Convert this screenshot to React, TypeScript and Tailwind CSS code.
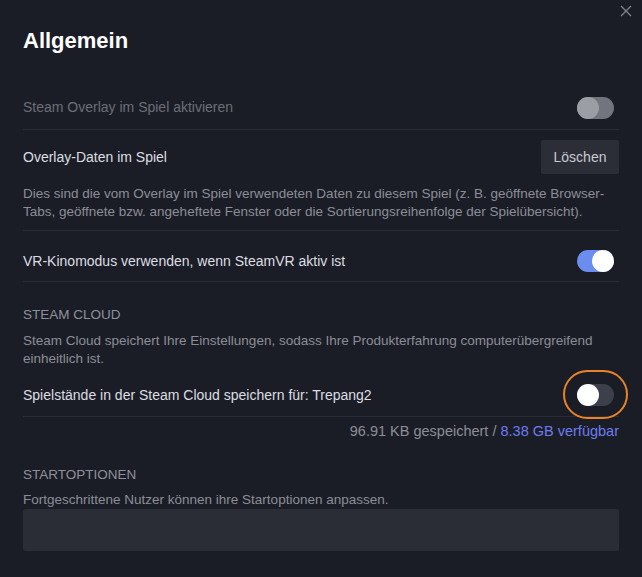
import React from 'react'

function Toggle({ on, dim }: { on: boolean; dim?: boolean }) {
  if (dim) {
    return (
      <div className="w-[37px] h-[22px] rounded-full bg-[#72757e] flex items-center">
        <div className="w-[22px] h-[22px] rounded-full bg-[#9c9ea6]" />
      </div>
    )
  }
  return (
    <div
      className={
        on
          ? 'w-[37px] h-[22px] rounded-full bg-[#6b8df0] flex items-center justify-end'
          : 'w-[37px] h-[22px] rounded-full bg-[#3d404b] flex items-center'
      }
    >
      <div className="w-[22px] h-[22px] rounded-full bg-white" />
    </div>
  )
}

export default function App() {
  return (
    <div
      className="relative w-[642px] h-[577px] overflow-hidden bg-[#1b1d26] text-[#dcdee2]"
      style={{ fontFamily: '"Liberation Sans", Arial, sans-serif' }}
    >
      <button className="absolute top-[5px] right-[10px] text-[#7e8189]">
        <svg width="12" height="12" viewBox="0 0 12 12" fill="none" stroke="currentColor" strokeWidth="1.4">
          <path d="M1 1 L11 11 M11 1 L1 11" />
        </svg>
      </button>

      <div className="px-[23px]">
        <h1 className="pt-[28px] text-[22px] leading-[26px] font-bold text-white">Allgemein</h1>

        <div className="mt-[32px] h-[44px] flex items-center justify-between border-b border-[#2a2d36]">
          <span className="text-[14px] text-[#6b6e77]">Steam Overlay im Spiel aktivieren</span>
          <div className="pr-[5px]">
            <Toggle on={false} dim />
          </div>
        </div>

        <div className="pt-[10px] pb-[9px] border-b border-[#2a2d36]">
          <div className="flex items-center justify-between">
            <span className="text-[14px]">Overlay-Daten im Spiel</span>
            <button className="h-[34px] w-[78px] rounded-[2px] bg-[#2b2e37] text-[14px] text-[#c9cbd1]">
              Löschen
            </button>
          </div>
          <p className="mt-[11px] pr-[14px] text-[13.5px] leading-[18px] text-[#8b8e97]">
            Dies sind die vom Overlay im Spiel verwendeten Daten zu diesem Spiel (z. B. geöffnete Browser-Tabs,
            geöffnete bzw. angeheftete Fenster oder die Sortierungsreihenfolge der Spielübersicht).
          </p>
        </div>

        <div className="pt-[19px] pb-[9px] flex items-center justify-between border-b border-[#2a2d36]">
          <span className="text-[14px]">VR-Kinomodus verwenden, wenn SteamVR aktiv ist</span>
          <div className="pr-[5px]">
            <Toggle on />
          </div>
        </div>

        <div className="pt-[24px]">
          <h2 className="text-[13.5px] leading-[18px] uppercase text-[#8e919a]">Steam Cloud</h2>
          <p className="mt-[8px] pr-[20px] text-[13.5px] leading-[18px] text-[#8b8e97]">
            Steam Cloud speichert Ihre Einstellungen, sodass Ihre Produkterfahrung computerübergreifend einheitlich ist.
          </p>
          <div className="pt-[16px] pb-[10px] flex items-center justify-between border-b border-[#2a2d36]">
            <span className="text-[14px]">Spielstände in der Steam Cloud speichern für: Trepang2</span>
            <div className="pr-[5px]">
              <div className="relative">
                <Toggle on={false} />
                <span className="absolute -left-[14px] -top-[14px] w-[65px] h-[49px] rounded-full border-2 border-[#e8832a]" />
              </div>
            </div>
          </div>
          <div className="mt-[5px] text-right text-[14.5px] leading-[18px] text-[#8b8e97]">
            96.91 KB gespeichert / <span className="text-[#6b7cf0]">8.38 GB verfügbar</span>
          </div>
        </div>

        <div className="mt-[26px]">
          <h2 className="text-[13.5px] leading-[18px] uppercase text-[#8e919a]">Startoptionen</h2>
          <p className="mt-[7px] text-[13.5px] leading-[18px] text-[#8b8e97]">
            Fortgeschrittene Nutzer können ihre Startoptionen anpassen.
          </p>
          <div className="h-[42px] rounded-[3px] bg-[#2a2d36]" />
        </div>
      </div>
    </div>
  )
}
